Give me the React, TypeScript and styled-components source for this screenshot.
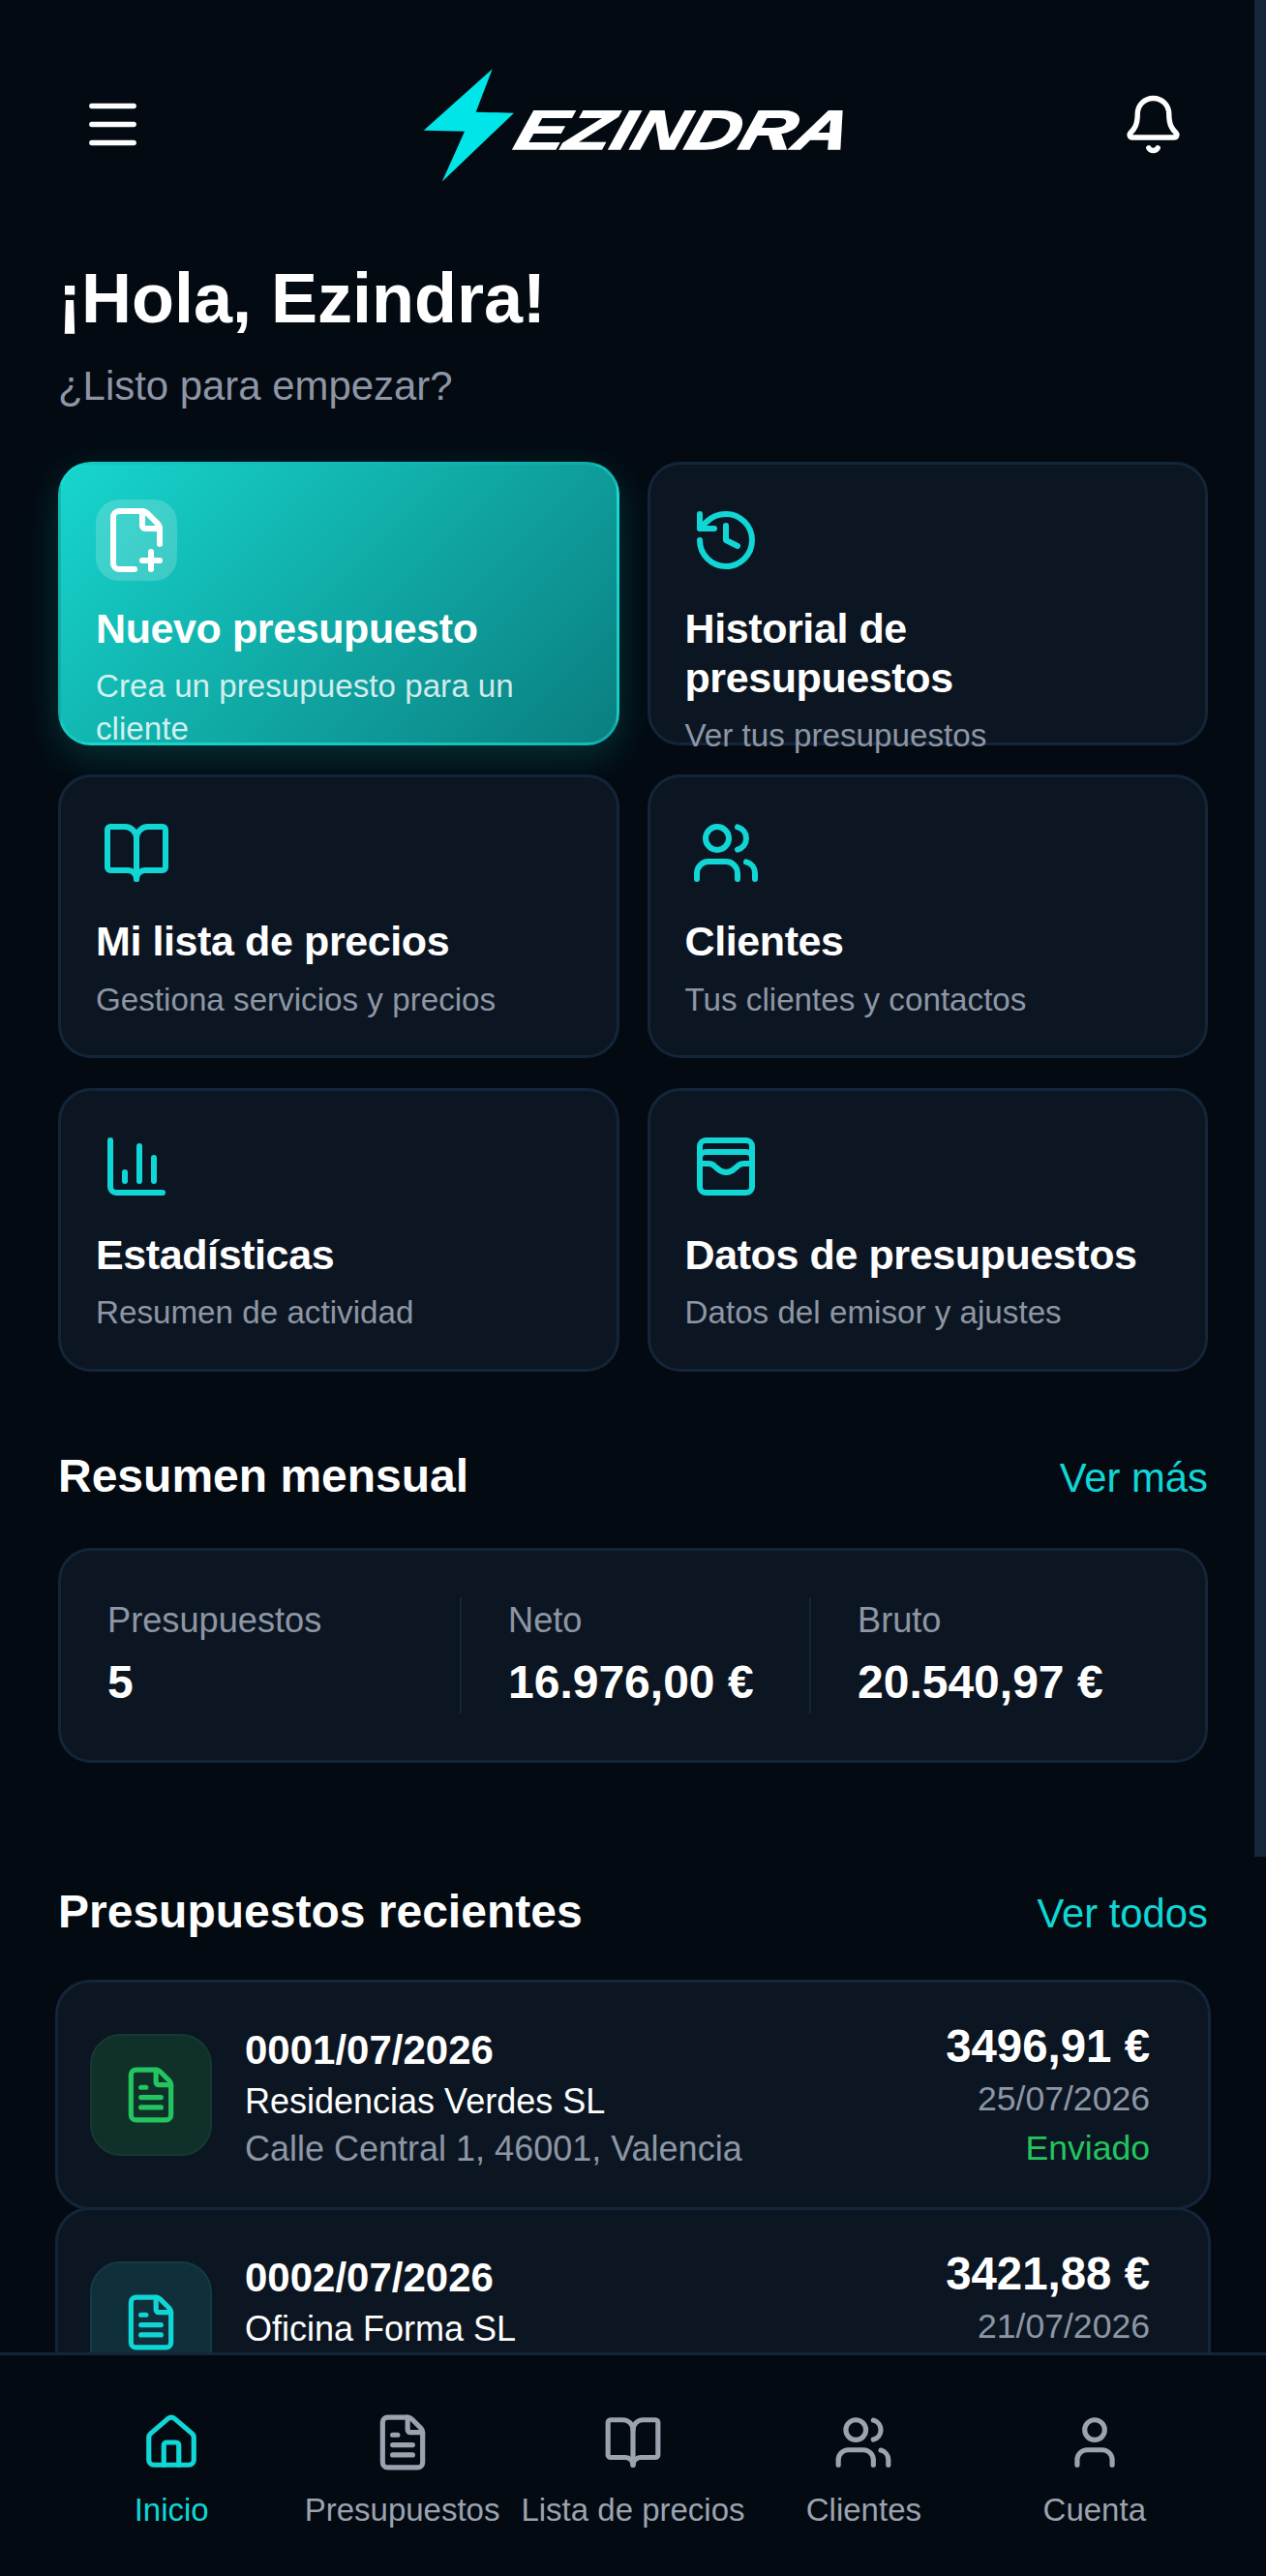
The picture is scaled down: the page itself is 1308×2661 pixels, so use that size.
import React from 'react'
import styled, { createGlobalStyle } from 'styled-components'
import {
  BookOpen,
  ChartColumn,
  Bell,
  FilePlusCorner,
  FileText,
  History,
  House,
  Menu,
  User,
  Users,
  WalletCards,
} from 'lucide-react'

const accent = '#11d6d6'
const muted = '#8e96a5'

const GlobalStyle = createGlobalStyle`
  html, body {
    margin: 0;
    padding: 0;
    background: #030a12;
    font-family: "Liberation Sans", Arial, sans-serif;
    color: #fff;
  }
  * {
    box-sizing: border-box;
  }
`

const actions = [
  { title: 'Nuevo presupuesto', text: 'Crea un presupuesto para un cliente', icon: FilePlusCorner, primary: true },
  { title: 'Historial de presupuestos', text: 'Ver tus presupuestos', icon: History },
  { title: 'Mi lista de precios', text: 'Gestiona servicios y precios', icon: BookOpen },
  { title: 'Clientes', text: 'Tus clientes y contactos', icon: Users },
  { title: 'Estadísticas', text: 'Resumen de actividad', icon: ChartColumn },
  { title: 'Datos de presupuestos', text: 'Datos del emisor y ajustes', icon: WalletCards },
]

const stats = [
  { label: 'Presupuestos', value: '5' },
  { label: 'Neto', value: '16.976,00 €' },
  { label: 'Bruto', value: '20.540,97 €' },
]

type Tone = 'green' | 'cyan'

const quotes: {
  number: string
  client: string
  address: string
  amount: string
  date: string
  status: string
  tone: Tone
}[] = [
  {
    number: '0001/07/2026',
    client: 'Residencias Verdes SL',
    address: 'Calle Central 1, 46001, Valencia',
    amount: '3496,91 €',
    date: '25/07/2026',
    status: 'Enviado',
    tone: 'green',
  },
  {
    number: '0002/07/2026',
    client: 'Oficina Forma SL',
    address: '',
    amount: '3421,88 €',
    date: '21/07/2026',
    status: '',
    tone: 'cyan',
  },
]

const navItems = [
  { label: 'Inicio', icon: House, active: true },
  { label: 'Presupuestos', icon: FileText },
  { label: 'Lista de precios', icon: BookOpen },
  { label: 'Clientes', icon: Users },
  { label: 'Cuenta', icon: User },
]

const Logo = () => (
  <LogoSvg viewBox="0 0 436 120" width="436" height="120" role="img" aria-label="Ezindra">
    <polygon points="71.7,2.3 54.7,46.7 94,47.7 19.7,118.7 43,66.7 0.7,65.7" fill="#00e5e8" />
    <text
      transform="translate(92,85) skewX(-16)"
      fontFamily="'Liberation Sans', Arial, sans-serif"
      fontSize="57"
      fontWeight="700"
      fontStyle="italic"
      fill="#fff"
      stroke="#fff"
      strokeWidth="1.5"
      textLength="344"
      lengthAdjust="spacingAndGlyphs"
    >
      EZINDRA
    </text>
  </LogoSvg>
)

export default function App() {
  return (
    <Screen>
      <GlobalStyle />
      <Content>
        <Header>
          <Menu size={65} color="#fff" strokeWidth={2} />
          <Logo />
          <Bell size={65} color="#fff" strokeWidth={2} />
        </Header>

        <Greeting>¡Hola, Ezindra!</Greeting>
        <Subtitle>¿Listo para empezar?</Subtitle>

        <ActionGrid>
          {actions.map((action) => (
            <ActionCard key={action.title} $primary={action.primary}>
              <ActionIcon $primary={action.primary}>
                <action.icon size={72} color={action.primary ? '#fff' : accent} strokeWidth={2} />
              </ActionIcon>
              <ActionTitle>{action.title}</ActionTitle>
              <ActionText $primary={action.primary}>{action.text}</ActionText>
            </ActionCard>
          ))}
        </ActionGrid>

        <MonthHeading>
          <SectionTitle>Resumen mensual</SectionTitle>
          <SectionLink>Ver más</SectionLink>
        </MonthHeading>

        <Summary>
          {stats.map((stat) => (
            <Stat key={stat.label}>
              <StatLabel>{stat.label}</StatLabel>
              <StatValue>{stat.value}</StatValue>
            </Stat>
          ))}
        </Summary>

        <RecentHeading>
          <SectionTitle>Presupuestos recientes</SectionTitle>
          <SectionLink>Ver todos</SectionLink>
        </RecentHeading>

        <QuoteList>
          {quotes.map((quote) => (
            <QuoteCard key={quote.number}>
              <QuoteIcon $tone={quote.tone}>
                <FileText size={62} strokeWidth={2} />
              </QuoteIcon>
              <QuoteBody>
                <QuoteNumber>{quote.number}</QuoteNumber>
                <QuoteClient>{quote.client}</QuoteClient>
                <QuoteAddress>{quote.address}</QuoteAddress>
              </QuoteBody>
              <QuoteMeta>
                <QuoteAmount>{quote.amount}</QuoteAmount>
                <QuoteDate>{quote.date}</QuoteDate>
                <QuoteStatus $tone={quote.tone}>{quote.status}</QuoteStatus>
              </QuoteMeta>
            </QuoteCard>
          ))}
        </QuoteList>
      </Content>

      <ScrollThumb />

      <BottomNav>
        {navItems.map((item) => (
          <NavItem key={item.label} $active={item.active}>
            <item.icon size={62} strokeWidth={2} />
            <span>{item.label}</span>
          </NavItem>
        ))}
      </BottomNav>
    </Screen>
  )
}

const Screen = styled.div`
  position: relative;
  width: 100%;
  height: 100vh;
  overflow: hidden;
  background: #030a12;
`

const Content = styled.main`
  width: 1296px;
  padding: 96px 48px 0 60px;
`

const ScrollThumb = styled.div`
  position: absolute;
  top: 0;
  right: 0;
  width: 12px;
  height: 1918px;
  background: #15263b;
`

const Header = styled.header`
  display: flex;
  align-items: center;
  justify-content: space-between;
  height: 65px;
  padding: 0 24px 0 24px;
`

const LogoSvg = styled.svg`
  flex: none;
  margin-left: 2px;
`

const Greeting = styled.h1`
  margin: 106px 0 0;
  font-size: 72px;
  font-weight: 700;
`

const Subtitle = styled.p`
  margin: 26px 0 0;
  font-size: 41.9px;
  color: ${muted};
`

const ActionGrid = styled.section`
  display: grid;
  grid-template-columns: 1fr 1fr;
  grid-auto-rows: 293px;
  gap: 30.5px 29px;
  margin-top: 53.5px;
`

const ActionCard = styled.article<{ $primary?: boolean }>`
  padding: 36px;
  border: 3px solid ${(p) => (p.$primary ? 'rgba(24, 224, 212, 0.45)' : '#14253a')};
  border-radius: 34px;
  background: ${(p) => (p.$primary ? 'linear-gradient(135deg, #17d6cd, #0a7e80)' : '#0c1622')};
  box-shadow: ${(p) => (p.$primary ? '0 12px 40px rgba(18, 214, 208, 0.2)' : 'none')};
`

const ActionIcon = styled.div<{ $primary?: boolean }>`
  display: flex;
  align-items: center;
  justify-content: center;
  width: 84px;
  height: 84px;
  border-radius: 24px;
  background: ${(p) => (p.$primary ? 'rgba(255, 255, 255, 0.18)' : 'transparent')};
`

const ActionTitle = styled.h2`
  margin: 24px 0 0;
  font-size: 43px;
  line-height: 51px;
  letter-spacing: -0.4px;
  font-weight: 700;
`

const ActionText = styled.p<{ $primary?: boolean }>`
  margin: 12.5px 0 0;
  font-size: 33.2px;
  line-height: 44px;
  color: ${(p) => (p.$primary ? 'rgba(255, 255, 255, 0.82)' : muted)};
`

const SectionHeading = styled.div`
  display: flex;
  align-items: baseline;
  justify-content: space-between;
`

const MonthHeading = styled(SectionHeading)`
  margin-top: 80px;
`

const RecentHeading = styled(SectionHeading)`
  margin-top: 126.5px;
`

const SectionTitle = styled.h2`
  margin: 0;
  font-size: 48px;
  font-weight: 700;
`

const SectionLink = styled.a`
  font-size: 41.8px;
  color: ${accent};
`

const Summary = styled.section`
  display: grid;
  grid-template-columns: 364px 361px 1fr;
  height: 222px;
  margin-top: 47px;
  padding: 48px 0 48px 48px;
  border: 3px solid #14253a;
  border-radius: 34px;
  background: #0c1622;
`

const Stat = styled.div`
  height: 120px;

  & + & {
    padding-left: 48px;
    border-left: 2.5px solid #14253a;
  }
`

const StatLabel = styled.div`
  font-size: 36.2px;
  line-height: 47px;
  color: ${muted};
`

const StatValue = styled.div`
  margin-top: 13px;
  font-size: 48px;
  font-weight: 700;
`

const QuoteList = styled.section`
  margin: 43px -3px 0;
`

const QuoteCard = styled.article`
  display: flex;
  align-items: center;
  height: 238px;
  padding: 0 60px 0 33px;
  border: 3px solid #14253a;
  border-radius: 36px;
  background: #0c1622;

  & + & {
    margin-top: -3px;
  }
`

const QuoteIcon = styled.div<{ $tone: Tone }>`
  flex: none;
  display: flex;
  align-items: center;
  justify-content: center;
  width: 126px;
  height: 126px;
  border: 2.5px solid ${(p) => (p.$tone === 'green' ? '#143a30' : '#133b45')};
  border-radius: 32px;
  background: ${(p) => (p.$tone === 'green' ? '#10302a' : '#0f2f3a')};
  color: ${(p) => (p.$tone === 'green' ? '#22c55e' : accent)};
`

const QuoteBody = styled.div`
  flex: 1;
  margin-left: 34px;
  padding-top: 9px;
`

const QuoteNumber = styled.div`
  font-size: 42px;
  font-weight: 700;
`

const QuoteClient = styled.div`
  margin-top: 5px;
  font-size: 36px;
  line-height: 47px;
`

const QuoteAddress = styled.div`
  min-height: 47px;
  margin-top: 2px;
  font-size: 36px;
  line-height: 47px;
  color: ${muted};
`

const QuoteMeta = styled.div`
  padding-top: 1px;
  text-align: right;
`

const QuoteAmount = styled.div`
  font-size: 47.4px;
  font-weight: 700;
`

const QuoteDate = styled.div`
  margin-top: 4px;
  font-size: 35.6px;
  line-height: 47px;
  color: ${muted};
`

const QuoteStatus = styled.div<{ $tone: Tone }>`
  min-height: 47px;
  margin-top: 3.5px;
  font-size: 35.6px;
  line-height: 47px;
  color: ${(p) => (p.$tone === 'green' ? '#22c55e' : accent)};
`

const BottomNav = styled.nav`
  position: absolute;
  left: 0;
  right: 0;
  bottom: 0;
  display: grid;
  grid-template-columns: repeat(5, 1fr);
  height: 231px;
  padding: 59px 58px 0;
  border-top: 3px solid #14253a;
  background: #030a12;
`

const NavItem = styled.a<{ $active?: boolean }>`
  display: flex;
  flex-direction: column;
  align-items: center;
  gap: 20px;
  font-size: 33px;
  white-space: nowrap;
  color: ${(p) => (p.$active ? accent : '#9ca3af')};
`
